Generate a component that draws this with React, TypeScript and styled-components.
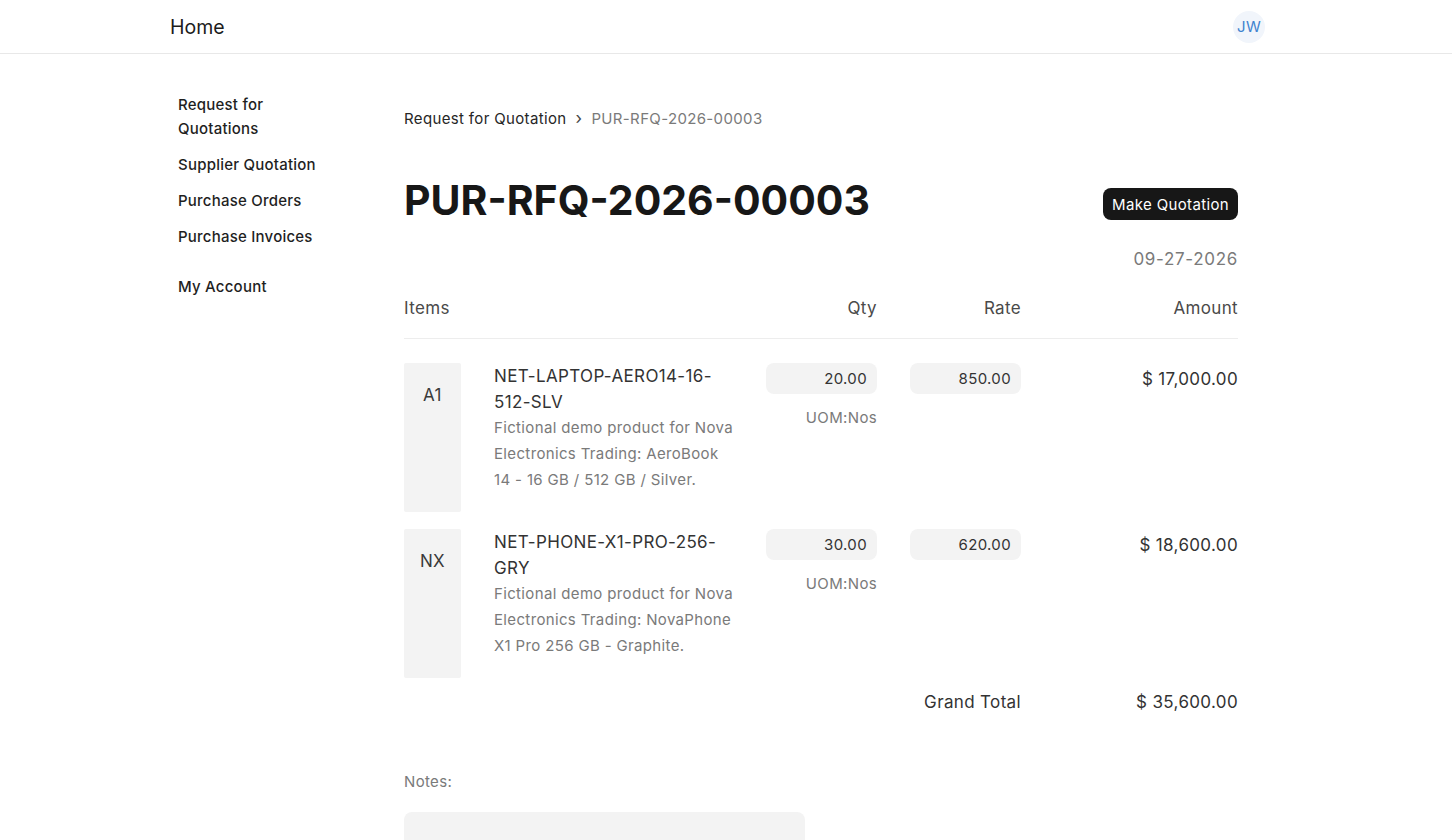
import styled, { createGlobalStyle } from 'styled-components';

type Item = {
    code: string;
    thumb: string;
    description: string;
    qty: string;
    rate: string;
    amount: string;
};

const items: Item[] = [
    {
        code: 'NET-LAPTOP-AERO14-16-512-SLV',
        thumb: 'A1',
        description: 'Fictional demo product for Nova Electronics Trading: AeroBook 14 - 16 GB / 512 GB / Silver.',
        qty: '20.00',
        rate: '850.00',
        amount: '$ 17,000.00',
    },
    {
        code: 'NET-PHONE-X1-PRO-256-GRY',
        thumb: 'NX',
        description: 'Fictional demo product for Nova Electronics Trading: NovaPhone X1 Pro 256 GB - Graphite.',
        qty: '30.00',
        rate: '620.00',
        amount: '$ 18,600.00',
    },
];

const sidebarLinks = ['Request for Quotations', 'Supplier Quotation', 'Purchase Orders', 'Purchase Invoices'];

export default function App() {
    return (
        <>
            <GlobalStyle />
            <Navbar>
                <NavInner>
                    <Brand>Home</Brand>
                    <Avatar>JW</Avatar>
                </NavInner>
            </Navbar>
            <Page>
                <Sidebar>
                    {sidebarLinks.map(link => (
                        <SideLink key={link}>{link}</SideLink>
                    ))}
                    <SideLink $spaced>My Account</SideLink>
                </Sidebar>

                <Main>
                    <Breadcrumb>
                        <Crumb>Request for Quotation</Crumb>
                        <Chevron>›</Chevron>
                        <Crumb $current>PUR-RFQ-2026-00003</Crumb>
                    </Breadcrumb>

                    <TitleRow>
                        <Title>PUR-RFQ-2026-00003</Title>
                        <PrimaryButton>Make Quotation</PrimaryButton>
                    </TitleRow>
                    <DateLine>09-27-2026</DateLine>

                    <TableHead>
                        <HeadCell>Items</HeadCell>
                        <HeadCell $right>Qty</HeadCell>
                        <HeadCell $right>Rate</HeadCell>
                        <HeadCell $right>Amount</HeadCell>
                    </TableHead>

                    <Rows>
                        {items.map(item => (
                            <ItemRow key={item.code}>
                                <ItemCell>
                                    <Thumb>{item.thumb}</Thumb>
                                    <ItemText>
                                        <ItemCode>{item.code}</ItemCode>
                                        <ItemDesc>{item.description}</ItemDesc>
                                    </ItemText>
                                </ItemCell>
                                <NumberCell>
                                    <Field>{item.qty}</Field>
                                    <Uom>UOM:Nos</Uom>
                                </NumberCell>
                                <NumberCell>
                                    <Field>{item.rate}</Field>
                                </NumberCell>
                                <Amount>{item.amount}</Amount>
                            </ItemRow>
                        ))}
                    </Rows>

                    <TotalRow>
                        <TotalLabel>Grand Total</TotalLabel>
                        <TotalValue>$ 35,600.00</TotalValue>
                    </TotalRow>

                    <NotesLabel>Notes:</NotesLabel>
                    <NotesBox />
                </Main>
            </Page>
        </>
    );
}

const GlobalStyle = createGlobalStyle`
    * {
        box-sizing: border-box;
    }

    body {
        margin: 0;
        background: #fff;
        color: #171717;
        font-family: Inter, "Noto Sans", sans-serif;
        letter-spacing: 0.022em;
        -webkit-font-smoothing: antialiased;
    }
`;

const Navbar = styled.header`
    height: 54px;
    border-bottom: 1px solid #e8e8e8;
`;

const NavInner = styled.div`
    width: 1112px;
    height: 100%;
    margin: 0 auto;
    padding-right: 17px;
    display: flex;
    align-items: center;
    justify-content: space-between;
`;

const Brand = styled.div`
    font-size: 19.5px;
    letter-spacing: 0;
    color: #1c1c1c;
`;

const Avatar = styled.div`
    width: 32px;
    height: 32px;
    border-radius: 50%;
    background: #f1f5fb;
    color: #3f83cf;
    font-size: 15px;
    display: flex;
    align-items: center;
    justify-content: center;
`;

const Page = styled.div`
    width: 1112px;
    margin: 0 auto;
    display: grid;
    grid-template-columns: 234px 834px;
`;

const Sidebar = styled.nav`
    padding: 39px 0 0 8px;
    display: flex;
    flex-direction: column;
    gap: 12px;
    width: 152px;
    box-sizing: content-box;
`;

const SideLink = styled.a<{ $spaced?: boolean }>`
    font-size: 15px;
    font-weight: 500;
    line-height: 24px;
    letter-spacing: 0.015em;
    color: #1f1f1f;
    cursor: pointer;
    margin-top: ${p => (p.$spaced ? '14px' : '0')};
`;

const Main = styled.main`
    padding-top: 54px;
`;

const Breadcrumb = styled.div`
    display: flex;
    align-items: center;
    gap: 9px;
    font-size: 15px;
    line-height: 22px;
`;

const Crumb = styled.span<{ $current?: boolean }>`
    color: ${p => (p.$current ? '#7a7a7a' : '#262626')};
`;

const Chevron = styled.span`
    color: #444;
    font-size: 17px;
    margin-top: -2px;
`;

const TitleRow = styled.div`
    margin-top: 43px;
    display: flex;
    justify-content: space-between;
    align-items: flex-start;
`;

const Title = styled.h1`
    margin: 0;
    font-size: 41px;
    font-weight: 650;
    line-height: 54px;
    letter-spacing: 0;
    color: #171717;
`;

const PrimaryButton = styled.button`
    margin-top: 15px;
    height: 32px;
    padding: 0 9px;
    border: none;
    border-radius: 8px;
    background: #171717;
    color: #fff;
    font-family: inherit;
    font-size: 15px;
    letter-spacing: inherit;
    cursor: pointer;
`;

const DateLine = styled.div`
    margin-top: 20px;
    text-align: right;
    font-size: 17px;
    letter-spacing: 0.04em;
    line-height: 24px;
    color: #7a7a7a;
`;

const columns = `1fr 137px 144px 217px`;

const TableHead = styled.div`
    margin-top: 25px;
    display: grid;
    grid-template-columns: ${columns};
    padding-bottom: 18px;
    border-bottom: 1px solid #ededed;
`;

const HeadCell = styled.div<{ $right?: boolean }>`
    font-size: 17px;
    line-height: 24px;
    color: #4a4a4a;
    text-align: ${p => (p.$right ? 'right' : 'left')};
`;

const Rows = styled.div`
    margin-top: 24px;
    display: flex;
    flex-direction: column;
    gap: 17px;
`;

const ItemRow = styled.div`
    display: grid;
    grid-template-columns: ${columns};
    align-items: start;
`;

const ItemCell = styled.div`
    display: flex;
    gap: 33px;
`;

const Thumb = styled.div`
    flex: none;
    width: 57px;
    height: 149px;
    padding-top: 20px;
    border-radius: 2px;
    background: #f3f3f3;
    color: #3a3a3a;
    font-size: 17px;
    line-height: 24px;
    text-align: center;
`;

const ItemText = styled.div`
    width: 242px;
`;

const ItemCode = styled.div`
    font-size: 17px;
    line-height: 26px;
    color: #333;
`;

const ItemDesc = styled.div`
    font-size: 15px;
    line-height: 26px;
    color: #7a7a7a;
`;

const NumberCell = styled.div`
    display: flex;
    flex-direction: column;
    align-items: flex-end;
`;

const Field = styled.div`
    width: 111px;
    height: 31px;
    padding: 0 10px;
    border-radius: 8px;
    background: #f3f3f3;
    color: #333;
    font-size: 15px;
    line-height: 31px;
    text-align: right;
`;

const Uom = styled.div`
    margin-top: 14px;
    font-size: 15px;
    line-height: 20px;
    color: #7a7a7a;
`;

const Amount = styled.div`
    padding-top: 4px;
    text-align: right;
    font-size: 17px;
    line-height: 24px;
    color: #333;
`;

const TotalRow = styled.div`
    margin-top: 12px;
    display: grid;
    grid-template-columns: 1fr 217px;
`;

const TotalLabel = styled.div`
    text-align: right;
    font-size: 17px;
    line-height: 24px;
    color: #333;
`;

const TotalValue = styled.div`
    text-align: right;
    font-size: 17px;
    line-height: 24px;
    color: #333;
`;

const NotesLabel = styled.div`
    margin-top: 58px;
    font-size: 15px;
    line-height: 20px;
    color: #7a7a7a;
`;

const NotesBox = styled.div`
    margin-top: 20px;
    width: 401px;
    height: 110px;
    border-radius: 8px;
    background: #f3f3f3;
`;
